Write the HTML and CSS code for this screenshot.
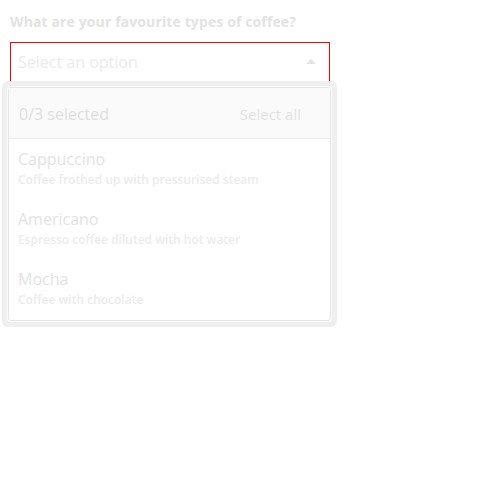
FILE: index.html
```html
<!DOCTYPE html>
<html>
<head>
<meta charset="utf-8">
<link rel="stylesheet" href="styles.css">
</head>
<body>
<div class="field">
  <div class="label">What are your favourite types of coffee?</div>
  <div class="select">
    <span class="placeholder">Select an option</span>
    <svg class="caret" width="10" height="5" viewBox="0 0 10 5"><path d="M0 5 L5 0 L10 5 Z" fill="#e4e4e4"></path></svg>
  </div>
  <div class="dropdown">
    <div class="panel">
      <div class="head">
        <span class="count">0/3 selected</span>
        <span class="all">Select all</span>
      </div>
      <div class="item">
        <div class="title">Cappuccino</div>
        <div class="desc">Coffee frothed up with pressurised steam</div>
      </div>
      <div class="item">
        <div class="title">Americano</div>
        <div class="desc">Espresso coffee diluted with hot water</div>
      </div>
      <div class="item">
        <div class="title">Mocha</div>
        <div class="desc">Coffee with chocolate</div>
      </div>
    </div>
  </div>
</div>
</body>
</html>
```
FILE: styles.css
```css
html, body { margin: 0; padding: 0; background: #fff; }
body { font-family: "Open Sans", sans-serif; }
.field { padding: 12px 10px 0; width: 320px; }
.label { font-size: 14px; font-weight: 700; color: #e3e3e3; line-height: 20px; margin-bottom: 10px; letter-spacing: 0.12px; }
.select { box-sizing: border-box; height: 39px; border: 1px solid #ff0000; border-bottom: 0; display: flex; align-items: center; justify-content: space-between; padding: 0 13px 0 7px; }
.placeholder { font-size: 16px; color: #ebebeb; }
.caret { margin-top: -2px; }
.dropdown { width: 335px; margin-left: -8px; box-sizing: border-box; padding: 6px; background: #efefef; border-radius: 6px; }
.panel { background: #fff; border: 1px solid #e6e6e6; border-radius: 3px; box-shadow: 0 0 0 1px #fafafa; padding-bottom: 1px; }
.head { height: 51px; box-sizing: border-box; background: #fafafa; border-bottom: 1px solid #ececec; display: flex; align-items: center; justify-content: space-between; padding: 1px 29px 0 10px; }
.count { font-size: 16px; color: #dedede; }
.all { font-size: 15px; color: #e2e2e2; }
.item { padding: 9px 9px 10px; }
.title { font-size: 16px; line-height: 22px; color: #e3e3e3; }
.desc { font-size: 12px; line-height: 19px; font-weight: 600; color: #ececec; }
```
